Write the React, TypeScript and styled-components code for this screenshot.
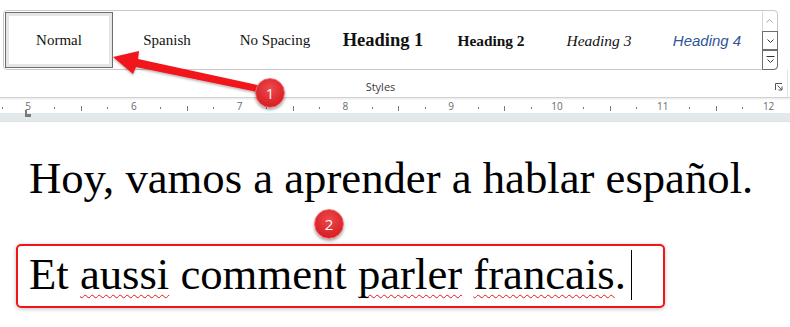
import styled, { createGlobalStyle } from "styled-components";

const Global = createGlobalStyle`
  html, body {
    margin: 0;
    padding: 0;
    background: #ffffff;
  }
  body {
    width: 790px;
    height: 327px;
    overflow: hidden;
  }
`;

const Page = styled.div`
  position: relative;
  width: 790px;
  height: 327px;
  background: #fff;
  overflow: hidden;
`;

const Ribbon = styled.div`
  height: 97px;
  background: #fff;
  border-bottom: 1px solid #cfd3d6;
  box-shadow: 0 1px 2px rgba(0, 0, 0, 0.1);
  display: flex;
  flex-direction: column;
  position: relative;
  z-index: 1;
`;

const Gallery = styled.div`
  margin: 10px 12px 0 3px;
  height: 58px;
  border: 1px solid #c9c9c9;
  border-radius: 4px;
  display: flex;
  padding-left: 1px;
`;

const Items = styled.div`
  display: grid;
  grid-template-columns: repeat(7, 108px);
  align-items: stretch;
  padding: 1px 0;
`;

const Item = styled.div<{ $selected?: boolean }>`
  display: flex;
  align-items: center;
  justify-content: center;
  white-space: nowrap;
  box-sizing: border-box;
  border: 1px solid ${(p) => (p.$selected ? "#6e6e6e" : "transparent")};
  box-shadow: ${(p) => (p.$selected ? "inset 0 0 0 3px #e6e6e6" : "none")};
  padding-top: 1px;
`;

const looks = {
  normal: `font: 400 15px "Liberation Serif", serif; color: #111;`,
  h1: `font: 700 18.5px "Liberation Serif", serif; color: #111;`,
  h2: `font: 700 15.4px "Liberation Serif", serif; color: #111;`,
  h3: `font: italic 400 15.5px "Liberation Serif", serif; color: #111;`,
  h4: `font: italic 400 15px "Liberation Sans", sans-serif; color: #2f5597;`,
};

const StyleName = styled.span<{ $look: keyof typeof looks }>`
  ${(p) => looks[p.$look]}
  line-height: 1;
`;

const ScrollColumn = styled.div`
  width: 15px;
  margin-left: auto;
  display: flex;
  flex-direction: column;
`;

const ScrollButton = styled.div<{ $active?: boolean }>`
  flex: 1;
  display: flex;
  align-items: center;
  justify-content: center;
  box-sizing: border-box;
  border: 1px solid ${(p) => (p.$active ? "#6e6e6e" : "transparent")};
  border-left-color: ${(p) => (p.$active ? "#6e6e6e" : "#d6d6d6")};
  margin: ${(p) => (p.$active ? "-1px -1px -1px 0" : "0")};
  border-radius: 0 4px 0 0;
  &:last-child {
    border-radius: 0 0 4px 0;
  }
  &:nth-child(2) {
    border-radius: 0;
  }
`;

const Footer = styled.div`
  flex: 1;
  display: grid;
  grid-template-columns: 1fr auto;
  align-items: center;
  padding-top: 6px;
  border-right: 1px solid #e3e3e3;
  margin-right: 2px;
`;

const GroupLabel = styled.div`
  font: 400 11px "Open Sans", "Noto Sans", sans-serif;
  color: #3b3b3b;
  text-align: center;
  padding-right: 14px;
`;

const Launcher = styled.div`
  width: 8px;
  height: 8px;
  margin-right: 4px;
  display: flex;
`;

const RulerBar = styled.div`
  height: 15px;
  background: #fff;
  position: relative;
`;

const RulerGutter = styled.div`
  height: 8px;
  background: #e3e8eb;
  border-bottom: 1px solid #dde2e5;
`;

const Doc = styled.div`
  padding: 31px 0 0 16px;
  display: flex;
  flex-direction: column;
  align-items: flex-start;
  gap: 41px;
`;

const Line = styled.div`
  font: 400 44.7px "Liberation Serif", "Times New Roman", serif;
  line-height: 50px;
  color: #000;
  white-space: nowrap;
  padding-left: 13px;
`;

const Boxed = styled.div`
  font: 400 44.7px "Liberation Serif", "Times New Roman", serif;
  line-height: 50px;
  color: #000;
  white-space: nowrap;
  border: 2px solid #f0141b;
  border-radius: 5px;
  padding: 2px 31px 6px 11px;
  box-shadow: 0 1px 4px rgba(0, 0, 0, 0.25);
  display: flex;
  align-items: center;
`;

const Misspelled = styled.span`
  text-decoration: underline wavy #e8141b;
  text-decoration-thickness: 1px;
  text-underline-offset: 5px;
  text-decoration-skip-ink: none;
`;

const Caret = styled.span`
  display: inline-block;
  width: 1px;
  height: 50px;
  background: #000;
  margin-left: 5px;
  margin-top: 2px;
`;

const Annotations = styled.svg`
  position: absolute;
  left: 0;
  top: 0;
  z-index: 2;
  pointer-events: none;
`;

const Badge = styled.div<{ $x: number; $y: number }>`
  position: absolute;
  left: ${(p) => p.$x - 15}px;
  top: ${(p) => p.$y - 15}px;
  width: 30px;
  height: 30px;
  box-sizing: border-box;
  border-radius: 50%;
  background: radial-gradient(circle at 50% 35%, #ee4a4e 0%, #dd2a2f 55%, #c9191f 100%);
  border: 1px solid #f26c6f;
  box-shadow: 0 2px 3px rgba(0, 0, 0, 0.35);
  color: #fff;
  font: 400 15px "Open Sans", "Liberation Sans", sans-serif;
  display: flex;
  align-items: center;
  justify-content: center;
  z-index: 3;
`;

const gallery: { name: string; look: keyof typeof looks }[] = [
  { name: "Normal", look: "normal" },
  { name: "Spanish", look: "normal" },
  { name: "No Spacing", look: "normal" },
  { name: "Heading 1", look: "h1" },
  { name: "Heading 2", look: "h2" },
  { name: "Heading 3", look: "h3" },
  { name: "Heading 4", look: "h4" },
];

const Chevron = ({ color }: { color: string }) => (
  <svg width="7" height="4" viewBox="0 0 7 4">
    <path d="M0.5 0.5 L3.5 3.5 L6.5 0.5" fill="none" stroke={color} strokeWidth="1" />
  </svg>
);

const Ruler = () => {
  const unit = 105.8;
  const origin = 28;
  const marks = [];
  for (let q = -1; q <= 31; q++) {
    const x = origin + (q * unit) / 4;
    if (x < 0 || x > 790) continue;
    const r = ((q % 4) + 4) % 4;
    if (r === 0) {
      marks.push(
        <text key={q} x={x} y={11.5} textAnchor="middle" fontSize="10" fill="#6a6a6a" fontFamily="Open Sans, Noto Sans, sans-serif">
          {5 + q / 4}
        </text>
      );
    } else if (r === 2) {
      marks.push(<rect key={q} x={Math.round(x)} y={8} width={1} height={5} fill="#7a7a7a" />);
    } else {
      marks.push(<rect key={q} x={Math.round(x)} y={9} width={1} height={2} fill="#7a7a7a" />);
    }
  }
  return (
    <RulerBar>
      <svg width="790" height="23" style={{ position: "absolute", left: 0, top: 0, overflow: "visible" }}>
        {marks}
        <path d="M25 12 H27 V16 H31 V19 H25 Z" fill="#7a7a7a" />
      </svg>
    </RulerBar>
  );
};

export default function App() {
  return (
    <Page>
      <Global />
      <Ribbon>
        <Gallery>
          <Items>
            {gallery.map((g, i) => (
              <Item key={g.name} $selected={i === 0}>
                <StyleName $look={g.look}>{g.name}</StyleName>
              </Item>
            ))}
          </Items>
          <ScrollColumn>
            <ScrollButton>
              <svg width="7" height="4" viewBox="0 0 7 4">
                <path d="M0.5 3.5 L3.5 0.5 L6.5 3.5" fill="none" stroke="#a8a8a8" strokeWidth="1" />
              </svg>
            </ScrollButton>
            <ScrollButton $active>
              <Chevron color="#333" />
            </ScrollButton>
            <ScrollButton $active>
              <svg width="9" height="8" viewBox="0 0 9 8">
                <path d="M0.5 0.5 H8.5" stroke="#333" strokeWidth="1" />
                <path d="M1.5 3.5 L4.5 6.5 L7.5 3.5" fill="none" stroke="#333" strokeWidth="1" />
              </svg>
            </ScrollButton>
          </ScrollColumn>
        </Gallery>
        <Footer>
          <GroupLabel>Styles</GroupLabel>
          <Launcher>
            <svg width="8" height="8" viewBox="0 0 8 8">
              <path d="M0.5 7 V0.5 H7" fill="none" stroke="#555" strokeWidth="1" />
              <path d="M2.5 2.5 L6.8 6.8" stroke="#555" strokeWidth="1" />
              <path d="M7 3.5 V7 H3.5" fill="none" stroke="#555" strokeWidth="1" />
            </svg>
          </Launcher>
        </Footer>
      </Ribbon>
      <Ruler />
      <RulerGutter />
      <Doc>
        <Line>Hoy, vamos a aprender a hablar español.</Line>
        <Boxed>
          <span>
            Et <Misspelled>aussi</Misspelled> comment <Misspelled>parler</Misspelled>{" "}
            <Misspelled>francais</Misspelled>.
          </span>
          <Caret />
        </Boxed>
      </Doc>
      <Annotations width="790" height="327" viewBox="0 0 790 327">
        <defs>
          <filter id="sh" x="-10%" y="-30%" width="130%" height="180%">
            <feDropShadow dx="0" dy="1.5" stdDeviation="1.2" floodColor="#000" floodOpacity="0.3" />
          </filter>
        </defs>
        <polygon
          points="113,57 139,51 138,59 262,86 262,93 136,67 133,74"
          fill="#f0141b"
          filter="url(#sh)"
        />
      </Annotations>
      <Badge $x={270} $y={93}>1</Badge>
      <Badge $x={329} $y={224}>2</Badge>
    </Page>
  );
}
